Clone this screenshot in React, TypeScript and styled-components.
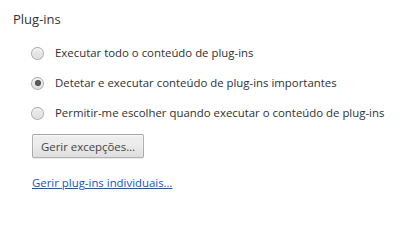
import styled, { createGlobalStyle } from 'styled-components';
import { useState } from 'react';

const Global = createGlobalStyle`
  html, body {
    margin: 0;
    padding: 0;
    background: #fff;
  }
  body {
    font-family: "Open Sans", "Noto Sans", sans-serif;
    color: #333;
  }
`;

const Page = styled.div`
  width: 409px;
  height: 201px;
  padding: 10px 0 0 13px;
  box-sizing: border-box;
`;

const Title = styled.h3`
  margin: 0;
  font-size: 13px;
  font-weight: normal;
  color: #333;
  line-height: 18px;
`;

const Options = styled.div`
  display: flex;
  flex-direction: column;
  gap: 12px;
  padding: 16px 0 0 18px;
`;

const RadioRow = styled.label`
  display: flex;
  align-items: center;
  gap: 11px;
  font-size: 11.4px;
  line-height: 18px;
  color: #303030;
  cursor: default;
`;

const RadioDot = styled.span<{ $checked: boolean }>`
  flex: none;
  width: 13px;
  height: 13px;
  box-sizing: border-box;
  border-radius: 50%;
  border: 1px solid rgba(0, 0, 0, 0.25);
  background: linear-gradient(#ededed, #dedede);
  box-shadow: inset 0 1px 2px rgba(255, 255, 255, 0.75);
  display: flex;
  align-items: center;
  justify-content: center;

  &::after {
    content: '';
    display: ${p => (p.$checked ? 'block' : 'none')};
    width: 6px;
    height: 6px;
    border-radius: 50%;
    background: radial-gradient(#666, #3a3a3a);
  }
`;

const Actions = styled.div`
  display: flex;
  flex-direction: column;
  align-items: flex-start;
  gap: 17px;
  padding: 12px 0 0 19px;
`;

const Button = styled.button`
  height: 24px;
  padding: 0 8px;
  font-family: inherit;
  font-size: 11.4px;
  color: #444;
  border: 1px solid rgba(0, 0, 0, 0.25);
  border-radius: 2px;
  background: linear-gradient(#ededed, #ededed 38%, #dedede);
  box-shadow: 0 1px 0 rgba(0, 0, 0, 0.08), inset 0 1px 2px rgba(255, 255, 255, 0.75);
`;

const Link = styled.a`
  font-size: 11.4px;
  line-height: 16px;
  color: #15c;
  text-decoration: underline;
  cursor: pointer;
`;

const options = [
  'Executar todo o conteúdo de plug-ins',
  'Detetar e executar conteúdo de plug-ins importantes',
  'Permitir-me escolher quando executar o conteúdo de plug-ins',
];

export default function App() {
  const [selected, setSelected] = useState(1);
  return (
    <Page>
      <Global />
      <Title>Plug-ins</Title>
      <Options>
        {options.map((text, i) => (
          <RadioRow key={text} onClick={() => setSelected(i)}>
            <RadioDot $checked={selected === i} />
            {text}
          </RadioRow>
        ))}
      </Options>
      <Actions>
        <Button>Gerir excepções…</Button>
        <Link>Gerir plug-ins individuais…</Link>
      </Actions>
    </Page>
  );
}
